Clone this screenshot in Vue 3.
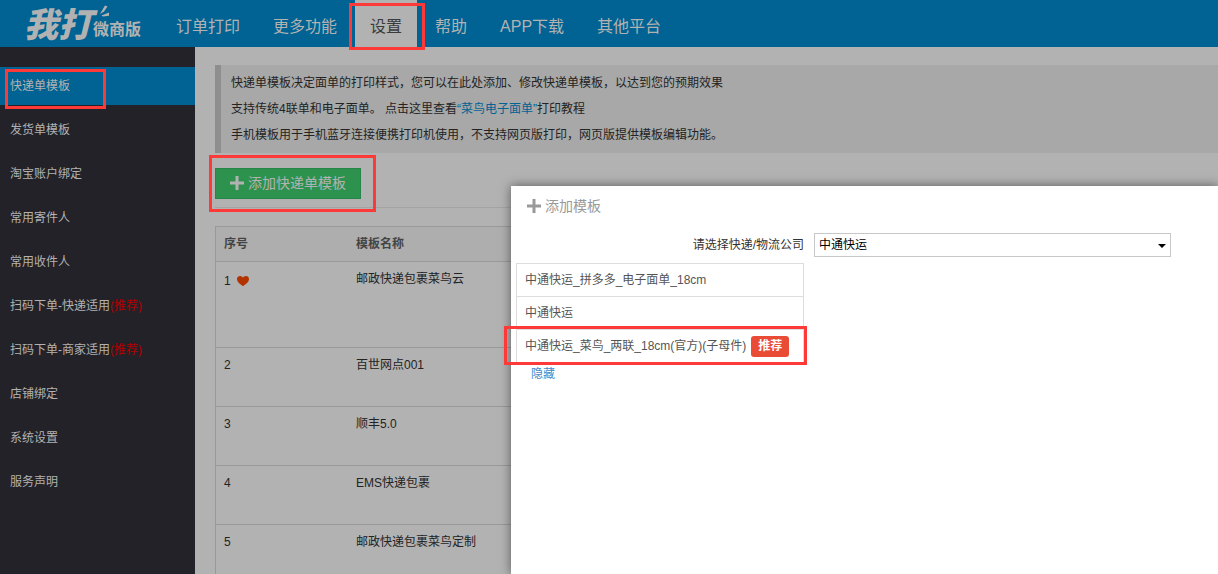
<script setup>
import { ref } from 'vue'

const nav = ['订单打印', '更多功能', '设置', '帮助', 'APP下载', '其他平台']
const activeNav = ref('设置')

const menu = [
  { label: '快递单模板' },
  { label: '发货单模板' },
  { label: '淘宝账户绑定' },
  { label: '常用寄件人' },
  { label: '常用收件人' },
  { label: '扫码下单-快递适用', hot: true },
  { label: '扫码下单-商家适用', hot: true },
  { label: '店铺绑定' },
  { label: '系统设置' },
  { label: '服务声明' },
]
const activeMenu = ref('快递单模板')

const rows = [
  { id: 1, name: '邮政快递包裹菜鸟云', favorite: true },
  { id: 2, name: '百世网点001' },
  { id: 3, name: '顺丰5.0' },
  { id: 4, name: 'EMS快递包裹' },
  { id: 5, name: '邮政快递包裹菜鸟定制' },
]

const company = ref('中通快运')
const templates = [
  { name: '中通快运_拼多多_电子面单_18cm' },
  { name: '中通快运' },
  { name: '中通快运_菜鸟_两联_18cm(官方)(子母件)', recommended: true },
]
</script>

<template>
  <div class="page">
    <header class="topbar">
      <a class="logo" href="#">
        <span class="logo-main">我打</span>
        <span class="logo-sub">微商版</span>
        <svg class="logo-spark" viewBox="0 0 10 14" aria-hidden="true">
          <path d="M0 9L5 0.500L7.500 1.500L4 6.500Z" />
          <path d="M1.500 10.500L9 7.500V10.800L3 11.500Z" />
        </svg>
      </a>
      <nav class="nav">
        <a
          v-for="item in nav"
          :key="item"
          href="#"
          class="nav-link"
          :class="{ active: item === activeNav }"
          @click.prevent="activeNav = item"
        >{{ item }}<i v-if="item === '设置'" class="mark mark-nav"></i></a>
      </nav>
    </header>

    <div class="body">
      <aside class="sidebar">
        <a
          v-for="item in menu"
          :key="item.label"
          href="#"
          class="menu-link"
          :class="{ active: item.label === activeMenu }"
          @click.prevent="activeMenu = item.label"
        >{{ item.label }}<span v-if="item.hot" class="hot">(推荐)</span><i v-if="item.label === '快递单模板'" class="mark mark-menu"></i></a>
      </aside>

      <main class="content">
        <div class="notice">
          <p>快递单模板决定面单的打印样式，您可以在此处添加、修改快递单模板，以达到您的预期效果</p>
          <p>支持传统4联单和电子面单。 点击这里查看<a href="#">“菜鸟电子面单”</a>打印教程</p>
          <p>手机模板用于手机蓝牙连接便携打印机使用，不支持网页版打印，网页版提供模板编辑功能。</p>
        </div>

        <div class="toolbar">
          <button type="button" class="add">
            <svg class="plus" viewBox="0 0 14 14" aria-hidden="true"><path d="M5.500 0h3v5.500h5.500v3h-5.500v5.500h-3v-5.500h-5.500v-3h5.500z" /></svg>
            <span>添加快递单模板</span>
            <i class="mark mark-add"></i>
          </button>
        </div>

        <table class="grid">
          <thead>
            <tr><th class="col-id">序号</th><th>模板名称</th></tr>
          </thead>
          <tbody>
            <tr v-for="row in rows" :key="row.id" :class="{ tall: row.favorite }">
              <td>
                <span class="num">{{ row.id }}
                  <svg v-if="row.favorite" class="heart" viewBox="0 0 12 10" aria-hidden="true">
                    <path d="M6 10C4.500 9.300 0 6 0 3.200C0 1.200 1.400 0 3.100 0C4.400 0 5.500 0.700 6 1.800C6.500 0.700 7.600 0 8.900 0C10.600 0 12 1.200 12 3.200C12 6 7.500 9.300 6 10Z" />
                  </svg>
                </span>
              </td>
              <td>{{ row.name }}</td>
            </tr>
          </tbody>
        </table>
      </main>
    </div>

    <section class="dialog" role="dialog" aria-labelledby="dialog-title">
      <h2 id="dialog-title" class="dialog-title">
        <svg class="plus" viewBox="0 0 14 14" aria-hidden="true"><path d="M5.500 0h3v5.500h5.500v3h-5.500v5.500h-3v-5.500h-5.500v-3h5.500z" /></svg>
        <span>添加模板</span>
      </h2>
      <div class="form">
        <label for="company">请选择快递/物流公司</label>
        <div class="select-wrap">
          <select id="company" v-model="company">
            <option>中通快运</option>
          </select>
          <svg class="caret" viewBox="0 0 8 4" aria-hidden="true"><path d="M0 0h8L4 4z" /></svg>
        </div>
        <div class="choices">
          <ul>
            <li v-for="t in templates" :key="t.name">
              <span>{{ t.name }}</span>
              <b v-if="t.recommended" class="badge">推荐</b>
              <i v-if="t.recommended" class="mark mark-choice"></i>
            </li>
          </ul>
          <a class="hide" href="#">隐藏</a>
        </div>
      </div>
    </section>
  </div>
</template>

<style>
body {
  margin: 0;
  background: #b2b2b2;
}
</style>

<style scoped>
* {
  box-sizing: border-box;
}
.page {
  position: relative;
  display: flex;
  flex-direction: column;
  height: 100vh;
  overflow: hidden;
  font: 12px/18px "Liberation Sans", "Noto Sans CJK SC", sans-serif;
  color: #232323;
  background: #b2b2b2;
}
a {
  text-decoration: none;
}
.topbar {
  flex: none;
  display: flex;
  height: 47px;
  background: #006393;
}
.logo {
  position: relative;
  display: flex;
  width: 161px;
  padding-left: 24px;
  color: #b2b2b2;
  white-space: nowrap;
}
.logo-main {
  width: 69px;
  font-size: 34px;
  line-height: 50px;
  font-weight: 900;
  font-style: italic;
}
.logo-sub {
  font-size: 16px;
  line-height: 60px;
  font-weight: 700;
}
.logo-spark {
  position: absolute;
  left: 100px;
  top: 5px;
  width: 10px;
  height: 14px;
  fill: #b2b2b2;
}
.nav {
  display: flex;
  gap: 3px;
}
.nav-link {
  position: relative;
  height: 47px;
  padding: 0 15px;
  font-size: 16px;
  line-height: 54px;
  color: #b2b2b2;
  white-space: nowrap;
}
.nav-link.active {
  background: #b2b2b2;
  color: #3b3b3b;
}
.body {
  flex: 1;
  display: flex;
  min-height: 0;
}
.sidebar {
  flex: none;
  width: 195px;
  padding-top: 20px;
  background: #232228;
}
.menu-link {
  position: relative;
  display: block;
  height: 38px;
  margin-bottom: 6px;
  padding-left: 10px;
  line-height: 38px;
  color: #b2b2b2;
}
.menu-link.active {
  background: #006393;
}
.hot {
  color: #b20000;
}
.content {
  flex: 1;
  min-width: 0;
  padding: 18px 0 0 20px;
}
.notice {
  padding: 5px 10px;
  border-left: 6px solid #8e8e8e;
  background: #a8a8a8;
  line-height: 26px;
}
.notice p {
  margin: 0;
}
.notice a {
  color: #006393;
}
.toolbar {
  padding: 15px 0 8px;
  border-bottom: 1px solid #a3a3a3;
}
.add {
  position: relative;
  display: flex;
  align-items: center;
  gap: 4px;
  height: 31px;
  padding: 0 14px 2px;
  border: 1px solid #26864a;
  background: #2e924f;
  color: #b2b2b2;
  font: 14px/20px "Liberation Sans", "Noto Sans CJK SC", sans-serif;
}
.plus {
  width: 14px;
  height: 14px;
  fill: currentColor;
}
.grid {
  width: 100%;
  margin-top: 18px;
  border-collapse: separate;
  border-spacing: 0;
  border: 1px solid #999;
  border-width: 1px 0 0 1px;
}
.grid th {
  height: 35px;
  padding: 0 8px;
  border-bottom: 1px solid #999;
  background: #aeaeae;
  color: #444;
  text-align: left;
}
.col-id {
  width: 132px;
}
.grid td {
  height: 59px;
  padding: 8px;
  border-bottom: 1px solid #999;
  vertical-align: top;
}
.tall td {
  height: 86px;
}
.num {
  display: flex;
  align-items: center;
  gap: 6px;
}
.tall .num {
  padding-top: 2px;
}
.heart {
  width: 12px;
  height: 10px;
  fill: #b23300;
}
.dialog {
  position: absolute;
  left: 511px;
  top: 186px;
  right: 0;
  bottom: 0;
  padding: 10px 5px;
  background: #fff;
  box-shadow: 0 0 10px rgba(0, 0, 0, 0.5);
}
.dialog-title {
  display: flex;
  align-items: center;
  gap: 4px;
  margin: 0 0 17px;
  padding-left: 11px;
  font-size: 14px;
  line-height: 20px;
  font-weight: 400;
  color: #999;
}
.form {
  display: grid;
  grid-template-columns: 288px minmax(0, 357px);
  column-gap: 10px;
  row-gap: 6px;
  align-items: center;
}
.form label {
  text-align: right;
  color: #333;
}
.select-wrap {
  position: relative;
}
.select-wrap select {
  display: block;
  width: 100%;
  height: 24px;
  padding: 0 4px;
  border: 1px solid #c8c8c8;
  border-radius: 0;
  appearance: none;
  background: #fff;
  color: #000;
  font: 12px/18px "Liberation Sans", "Noto Sans CJK SC", sans-serif;
}
.caret {
  position: absolute;
  right: 5px;
  top: 11px;
  width: 8px;
  height: 4px;
  pointer-events: none;
}
.choices ul {
  margin: 0;
  padding: 0;
  list-style: none;
  border: 1px solid #ddd;
  border-top: 0;
}
.choices li {
  position: relative;
  display: flex;
  align-items: center;
  gap: 5px;
  height: 33px;
  padding-left: 8px;
  border-top: 1px solid #ddd;
  color: #555;
  white-space: nowrap;
}
.badge {
  padding: 0 7px;
  border-radius: 3px;
  background: #e94b35;
  color: #fff;
  line-height: 21px;
}
.hide {
  display: inline-block;
  padding-left: 15px;
  line-height: 22px;
  color: #428bca;
}
.mark {
  position: absolute;
  z-index: 1;
  border: 3px solid #fd3a38;
  pointer-events: none;
}
.mark-nav {
  inset: 3px -8px -3px -6px;
}
.mark-menu {
  left: 5px;
  top: 2px;
  width: 101px;
  height: 40px;
}
.mark-add {
  inset: -14px -16px -14px -7px;
}
.mark-choice {
  inset: -4px -4px -3px -13px;
}
</style>
